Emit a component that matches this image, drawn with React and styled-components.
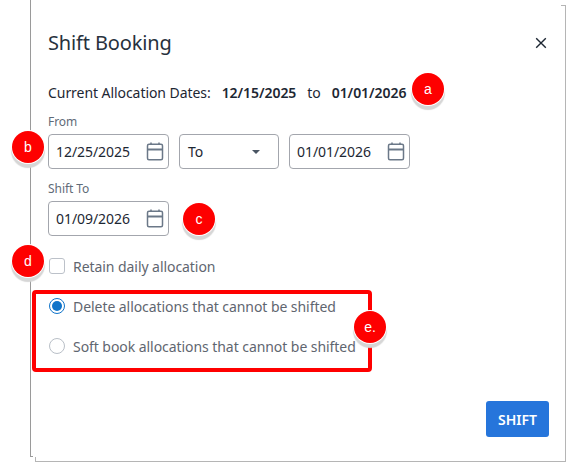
import React from "react";
import styled, { createGlobalStyle } from "styled-components";

const GlobalStyle = createGlobalStyle`
  html, body {
    margin: 0;
    padding: 0;
    background: #fff;
  }
  body {
    font-family: "Noto Sans", "Open Sans", sans-serif;
    color: #1d2733;
    letter-spacing: -0.06px;
  }
`;

const Page = styled.div`
  position: relative;
  width: 566px;
  height: 462px;
  overflow: hidden;
  background: #fff;
`;

const Modal = styled.div`
  box-sizing: border-box;
  width: 536px;
  height: 462px;
  margin-left: 30px;
  padding: 27px 17px 25px 18px;
  display: flex;
  flex-direction: column;
`;

const Header = styled.div`
  display: flex;
  align-items: center;
  justify-content: space-between;
  height: 32px;
  padding-right: 2px;
`;

const Title = styled.h2`
  margin: 0;
  font-size: 20px;
  font-weight: 400;
  line-height: 32px;
  letter-spacing: -0.15px;
  color: #27313d;
`;

const CloseButton = styled.button`
  display: flex;
  border: 0;
  padding: 0;
  background: none;
  color: #1d2733;
`;

const CurrentDates = styled.div`
  display: flex;
  align-items: center;
  margin-top: 23px;
  height: 20px;
  font-size: 14px;
`;

const DateValue = styled.strong`
  font-weight: 600;
  margin-left: ${(p) => p.$gap}px;
`;

const Joiner = styled.span`
  margin-left: 11px;
  margin-right: -1px;
`;

const FieldLabel = styled.div`
  margin-top: 12px;
  font-size: 12px;
  line-height: 16px;
  color: #5f6b78;
`;

const FieldRow = styled.div`
  display: flex;
  gap: 10px;
  margin-top: 4px;
`;

const Box = styled.div`
  box-sizing: border-box;
  display: flex;
  align-items: center;
  justify-content: space-between;
  width: ${(p) => p.$width}px;
  height: 35px;
  padding: 0 2px 0 7px;
  border: 1px solid #a3a6ad;
  border-radius: 4px;
  font-size: 14px;
  color: #1d2733;
`;

const SelectBox = styled(Box)`
  padding: 0 18px 0 8px;
`;

const Caret = styled.span`
  width: 0;
  height: 0;
  border-left: 4px solid transparent;
  border-right: 4px solid transparent;
  border-top: 4px solid #4a5563;
`;

const OptionRow = styled.label`
  display: flex;
  align-items: center;
  gap: 8px;
  height: 20px;
  margin-top: 20px;
  padding-left: 1px;
  font-size: 14px;
  color: #5f6670;
`;

const Checkbox = styled.span`
  box-sizing: border-box;
  width: 16px;
  height: 16px;
  border: 1px solid #bcc1c9;
  border-radius: 3px;
  background: #fff;
`;

const Radio = styled.span`
  box-sizing: border-box;
  width: 16px;
  height: 16px;
  border-radius: 50%;
  background: #fff;
  border: ${(p) => (p.$checked ? "1.5px solid #0f73c9" : "1px solid #b9bfc7")};
  display: flex;
  align-items: center;
  justify-content: center;

  &::after {
    content: "";
    display: ${(p) => (p.$checked ? "block" : "none")};
    width: 10px;
    height: 10px;
    border-radius: 50%;
    background: #0f73c9;
  }
`;

const Footer = styled.div`
  margin-top: auto;
  display: flex;
  justify-content: flex-end;
`;

const ShiftButton = styled.button`
  width: 63px;
  height: 36px;
  border: 0;
  border-radius: 3px;
  background: #2675db;
  color: #fff;
  font-family: inherit;
  font-size: 14px;
  font-weight: 600;
`;

const edgePlaces = {
  left: "left: 30px; top: 0; width: 1px; height: 457px; background: #9a9a9a;",
  leftHook: "left: 30px; top: 456px; width: 3px; height: 1px; background: #9a9a9a;",
  right: "left: 565px; top: 5px; width: 1px; height: 457px; background: #b5b5b5;",
  rightHook: "left: 561px; top: 5px; width: 4px; height: 1px; background: #b5b5b5;",
  bottom: "left: 35px; top: 461px; width: 531px; height: 1px; background: #b5b5b5;",
  bottomHook: "left: 35px; top: 457px; width: 1px; height: 4px; background: #b5b5b5;",
};

const EdgeLine = styled.div`
  position: absolute;
  ${(p) => edgePlaces[p.$edge]}
`;

const Highlight = styled.div`
  position: absolute;
  left: 32px;
  top: 290px;
  width: 340px;
  height: 82px;
  box-sizing: border-box;
  border: 4px solid #ff0000;
  border-radius: 4px;
  pointer-events: none;
`;

const Badge = styled.span`
  position: absolute;
  left: ${(p) => p.$x - 16}px;
  top: ${(p) => p.$y - 16}px;
  width: 32px;
  height: 32px;
  border-radius: 50%;
  background: #fe0000;
  color: #fff;
  font-family: "Liberation Sans", Arial, sans-serif;
  font-size: 14px;
  letter-spacing: 0;
  line-height: 33px;
  text-align: center;
  box-shadow: 0 0 0 1px #fff, 0 4px 1px 1px #d6d6d6;
`;

const CalendarIcon = () => (
  <svg width="22" height="22" viewBox="0 0 22 22" fill="none" stroke="#6b7888" strokeWidth="1.5">
    <rect x="3.5" y="3.25" width="15" height="15.5" rx="1.5" />
    <path d="M3.5 8.5h15" strokeWidth="2" />
    <path d="M7 1.5v2.5M15 1.5v2.5" />
  </svg>
);

const CloseIcon = () => (
  <svg width="12" height="12" viewBox="0 0 12 12" fill="none" stroke="currentColor" strokeWidth="1.4">
    <path d="M1.2 1.2l9.6 9.6M10.8 1.2l-9.6 9.6" />
  </svg>
);

const DateField = ({ value }) => (
  <Box $width={121}>
    {value}
    <CalendarIcon />
  </Box>
);

const App = () => (
  <Page>
    <GlobalStyle />
    <Modal>
      <Header>
        <Title>Shift Booking</Title>
        <CloseButton>
          <CloseIcon />
        </CloseButton>
      </Header>
      <CurrentDates>
        Current Allocation Dates:
        <DateValue $gap={11}>12/15/2025</DateValue>
        <Joiner>to</Joiner>
        <DateValue $gap={12}>01/01/2026</DateValue>
      </CurrentDates>
      <FieldLabel>From</FieldLabel>
      <FieldRow>
        <DateField value="12/25/2025" />
        <SelectBox $width={100}>
          To
          <Caret />
        </SelectBox>
        <DateField value="01/01/2026" />
      </FieldRow>
      <FieldLabel>Shift To</FieldLabel>
      <FieldRow>
        <DateField value="01/09/2026" />
      </FieldRow>
      <OptionRow>
        <Checkbox />
        Retain daily allocation
      </OptionRow>
      <OptionRow>
        <Radio $checked />
        Delete allocations that cannot be shifted
      </OptionRow>
      <OptionRow>
        <Radio />
        Soft book allocations that cannot be shifted
      </OptionRow>
      <Footer>
        <ShiftButton>SHIFT</ShiftButton>
      </Footer>
    </Modal>
    <EdgeLine $edge="left" />
    <EdgeLine $edge="leftHook" />
    <EdgeLine $edge="right" />
    <EdgeLine $edge="rightHook" />
    <EdgeLine $edge="bottom" />
    <EdgeLine $edge="bottomHook" />
    <Highlight />
    <Badge $x={428} $y={89}>a</Badge>
    <Badge $x={28} $y={147}>b</Badge>
    <Badge $x={199} $y={219}>c</Badge>
    <Badge $x={28} $y={261}>d</Badge>
    <Badge $x={370} $y={327}>e.</Badge>
  </Page>
);

export default App;
